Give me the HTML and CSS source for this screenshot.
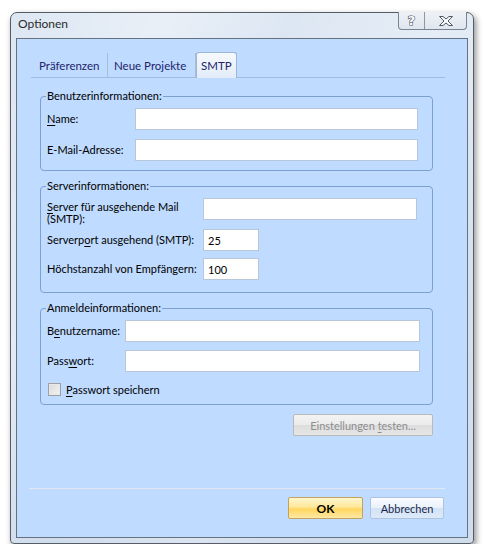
FILE: index.html
```html
<!DOCTYPE html>
<html lang="de">
<head>
<meta charset="utf-8">
<title>Optionen</title>
<link rel="stylesheet" href="styles.css">
</head>
<body>
<div class="window">
  <div class="titlebar">
    <span class="title">Optionen</span>
    <div class="capbtns">
      <span class="cap help">?</span>
      <span class="cap close">
        <svg width="14" height="10" viewBox="0 0 14 10"><polygon points="0.5,0.5 4,0.5 7,3 10,0.5 13.5,0.5 9,5 13.5,9.5 10,9.5 7,7 4,9.5 0.5,9.5 5,5" fill="#fbfcfd" stroke="#4d5866" stroke-width="1" stroke-linejoin="round"/></svg>
      </span>
    </div>
  </div>
  <div class="client">
    <div class="tabs">
      <span class="tab t1">Präferenzen</span>
      <span class="tab t2">Neue Projekte</span>
      <span class="tab active">SMTP</span>
    </div>
    <div class="panel">
      <fieldset class="group g1">
        <legend>Benutzerinformationen:</legend>
        <div class="row">
          <label class="lbl w1"><u>N</u>ame:</label>
          <span class="input wide1"></span>
        </div>
        <div class="row r-gap9">
          <label class="lbl w1">E-Mail-Adresse:</label>
          <span class="input wide1"></span>
        </div>
      </fieldset>
      <fieldset class="group g2">
        <legend>Serverinformationen:</legend>
        <div class="row top">
          <label class="lbl w2 two"><u>S</u>erver für ausgehende Mail<br>(SMTP):</label>
          <span class="input wide2"></span>
        </div>
        <div class="row r-gap4">
          <label class="lbl w2">Serverp<u>o</u>rt ausgehend (SMTP):</label>
          <span class="input small">25</span>
        </div>
        <div class="row r-gap7">
          <label class="lbl w2">Höchstanzahl von Empfängern:</label>
          <span class="input small">100</span>
        </div>
      </fieldset>
      <fieldset class="group g3">
        <legend>Anmeldeinformationen:</legend>
        <div class="row">
          <label class="lbl w3">B<u>e</u>nutzername:</label>
          <span class="input wide3"></span>
        </div>
        <div class="row r-gap8">
          <label class="lbl w3">Pass<u>w</u>ort:</label>
          <span class="input wide3"></span>
        </div>
        <div class="row check-row">
          <span class="checkbox"></span>
          <span class="check-label"><u>P</u>asswort speichern</span>
        </div>
      </fieldset>
      <button class="btn test" disabled>Einstellungen <u>t</u>esten...</button>
    </div>
    <div class="spacer"></div>
    <div class="sep"></div>
    <div class="footer">
      <button class="btn ok">OK</button>
      <button class="btn cancel">Abbrechen</button>
    </div>
  </div>
</div>
</body>
</html>
```
FILE: styles.css
```css
* { box-sizing: border-box; }
html, body { margin: 0; padding: 0; }
body {
  background: #ffffff;
  font-family: Lato, "Noto Sans", sans-serif;
  font-size: 11px;
  color: #000;
}
u { text-decoration: underline; text-underline-offset: 2px; }

.window {
  margin: 12px 0 0 10px;
  width: 464px;
  height: 532px;
  border: 1px solid #565d66;
  border-radius: 7px 7px 4px 4px;
  background:
    linear-gradient(115deg, rgba(255,255,255,0) 0%, rgba(255,255,255,0.35) 22%, rgba(255,255,255,0) 40%, rgba(255,255,255,0.25) 60%, rgba(255,255,255,0) 80%),
    linear-gradient(#dde7f3, #cfdcec);
  padding: 0 5px 5px;
  box-shadow: 2px 3px 6px rgba(0,0,0,0.45);
  display: flex;
  flex-direction: column;
}

.titlebar {
  height: 25px;
  display: flex;
  justify-content: space-between;
  align-items: flex-start;
  flex: none;
}
.title {
  margin: 2px 0 0 2px;
  line-height: 18px;
  font-size: 12px;
  color: #2b2b2b;
}
.capbtns {
  display: flex;
  margin: -1px 1px 0 0;
  height: 18px;
  border: 1px solid #7a8391;
  border-top: none;
  border-radius: 0 0 4px 4px;
  background: linear-gradient(#eef2f7, #dfe6ef);
  overflow: hidden;
}
.cap {
  display: flex;
  align-items: center;
  justify-content: center;
  height: 17px;
}
.help {
  width: 26px;
  border-right: 1px solid #8e97a4;
  font-family: "DejaVu Sans", sans-serif;
  font-weight: bold;
  font-size: 13px;
  color: #fbfcfd;
  -webkit-text-stroke: 1.2px #4d5866;
  paint-order: stroke fill;
}
.close { width: 41px; }

.client {
  flex: 1;
  border: 1px solid #66737f;
  background: #bfdbff;
  display: flex;
  flex-direction: column;
}

.tabs {
  display: flex;
  margin: 14px 22px 0 14px;
  height: 25px;
  border-bottom: 1px solid #a3bbd9;
  flex: none;
}
.tab {
  display: flex;
  align-items: center;
  height: 24px;
  color: #22236b;
  border-right: 1px solid #a6bedc;
  white-space: nowrap;
  font-size: 11.5px;
}
.t1 { width: 77px; padding-left: 8px; }
.t2 { width: 88px; padding-left: 6px; }
.tab.active {
  width: 41px;
  height: 26px;
  margin-top: -1px;
  margin-bottom: -1px;
  padding: 0 0 0 4px;
  border: 1px solid #9db6d6;
  border-bottom: none;
  border-radius: 3px 3px 0 0;
  background: linear-gradient(#f6f9fd, #e2ecf8);
}

.panel {
  display: flex;
  flex-direction: column;
  margin: 10px 34px 0 23px;
}

.group {
  margin: 0;
  border: 1px solid #7ca0d0;
  border-radius: 4px;
  padding: 4px 12px 9px 6px;
  min-width: 0;
}
.group legend {
  padding: 0 1px;
  line-height: 16px;
  margin-left: -1px;
}
.g2 { margin-top: 7px; padding-bottom: 12px; }
.g3 { margin-top: 7px; padding-bottom: 8px; }

.row {
  display: flex;
  align-items: center;
}
.row.top { align-items: flex-start; height: 27px; }
.r-gap9 { margin-top: 9px; }
.r-gap8 { margin-top: 8px; }
.r-gap7 { margin-top: 7px; }
.r-gap4 { margin-top: 4px; }

.lbl { flex: none; white-space: nowrap; margin-top: -2px; }
.w1 { width: 88px; }
.w2 { width: 156px; }
.w3 { width: 78px; }
.two { line-height: 12px; margin-top: 3px; }

.input {
  display: flex;
  align-items: center;
  height: 22px;
  border: 1px solid #b7c7da;
  background: #fff;
  padding: 0 4px;
  flex: none;
}
.wide1 { width: 283px; }
.wide2 { width: 214px; }
.wide3 { width: 295px; }
.small { width: 56px; }

.check-row { margin-top: 11px; height: 13px; }
.checkbox {
  width: 13px;
  height: 13px;
  margin-left: 1px;
  border: 1px solid #a0a0a0;
  background: linear-gradient(135deg, #d9d9d9, #f4f4f4);
  box-shadow: inset 0 0 0 1px #e8e8e8;
}
.check-label { margin-left: 5px; }

.btn {
  font-family: inherit;
  font-size: 11px;
  height: 22px;
  padding: 0;
  border-radius: 2px;
  cursor: default;
}
.test {
  align-self: flex-end;
  margin-top: 9px;
  width: 140px;
  color: #8e8e8e;
  border: 1px solid #b9b9b9;
  background: linear-gradient(#f3f3f3 0%, #ebebeb 50%, #dddddd 51%, #e6e6e6 100%);
}

.spacer { flex: 1; }
.sep {
  height: 1px;
  margin: 0 22px 0 12px;
  background: #e3e8ee;
  flex: none;
}
.footer {
  display: flex;
  justify-content: flex-end;
  gap: 7px;
  margin: 8px 23px 18px 0;
  flex: none;
}
.ok {
  width: 75px;
  font-weight: bold;
  font-size: 12px;
  color: #000;
  border: 1px solid #c3a15e;
  background: linear-gradient(#fff6cf 0%, #ffe89a 45%, #ffd65e 55%, #ffe8a4 100%);
}
.cancel {
  width: 74px;
  color: #1b2a4a;
  border: 1px solid #aec3de;
  background: linear-gradient(#fafcff 0%, #e9f1fb 48%, #d3e3f7 52%, #dde9f8 100%);
}
```
